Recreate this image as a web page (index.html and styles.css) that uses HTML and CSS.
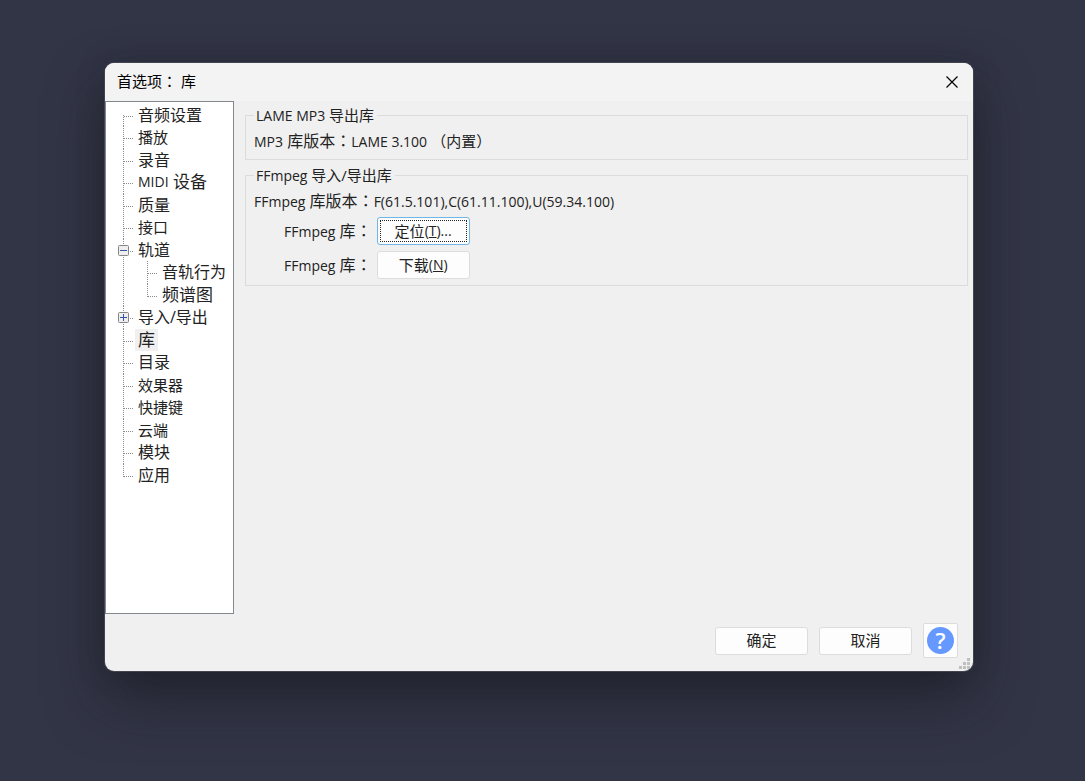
FILE: index.html
```html
<!DOCTYPE html>
<html lang="zh-CN">
<head>
<meta charset="utf-8">
<title>首选项： 库</title>
<link rel="stylesheet" href="styles.css">
</head>
<body>
<main class="dialog">
  <header class="titlebar">
    <h1 class="title">首选项<span class="colon" lang="zh-TW">：</span> 库</h1>
    <button class="close" type="button" aria-label="关闭">
      <svg width="12" height="12" viewBox="0 0 12 12"><path d="M0.5 0.5 11.5 11.5M11.5 0.5 0.5 11.5" stroke="#000" stroke-width="1.2" fill="none"/></svg>
    </button>
  </header>
  <div class="content">
    <nav class="sidebar">
      <ul class="tree">
        <li><span class="row wide">音频设置</span></li>
        <li><span class="row">播放</span></li>
        <li><span class="row wide">录音</span></li>
        <li><span class="row large"><span class="latin">MIDI</span>&nbsp;设备</span></li>
        <li><span class="row wide">质量</span></li>
        <li><span class="row">接口</span></li>
        <li class="branch"><span class="row wide"><button class="toggle" type="button" aria-label="折叠"><svg width="11" height="11" viewBox="0 0 11 11"><rect x=".5" y=".5" width="10" height="10" rx="1" fill="#eee" stroke="#858585"/><path d="M2 5.500h7" stroke="#3454a8"/></svg></button>轨道</span>
          <ul class="subtree">
            <li><span class="row wide">音轨行为</span></li>
            <li><span class="row large">频谱图</span></li>
          </ul>
        </li>
        <li><span class="row wide"><button class="toggle" type="button" aria-label="展开"><svg width="11" height="11" viewBox="0 0 11 11"><rect x=".5" y=".5" width="10" height="10" rx="1" fill="#eee" stroke="#858585"/><path d="M2 5.500h7M5.500 2v7" stroke="#3454a8"/></svg></button>导入/导出</span></li>
        <li><span class="row large"><span class="selected">库</span></span></li>
        <li><span class="row wide">目录</span></li>
        <li><span class="row">效果器</span></li>
        <li><span class="row">快捷键</span></li>
        <li><span class="row">云端</span></li>
        <li><span class="row wide">模块</span></li>
        <li><span class="row wide">应用</span></li>
      </ul>
    </nav>
    <section class="panel">
      <fieldset class="group">
        <legend><span class="latin">LAME MP3</span> 导出库</legend>
        <p class="version"><span class="latin">MP3</span> 库版本<span class="colon" lang="zh-TW">：</span><span class="latin">LAME 3.100</span> <span class="note">（内置）</span></p>
      </fieldset>
      <fieldset class="group">
        <legend><span class="latin">FFmpeg</span> 导入/导出库</legend>
        <p class="version"><span class="latin">FFmpeg</span> 库版本<span class="colon" lang="zh-TW">：</span><span class="latin">F(61.5.101),C(61.11.100),U(59.34.100)</span></p>
        <div class="fields">
          <label for="locate"><span class="latin">FFmpeg</span> 库<span class="colon" lang="zh-TW">：</span></label>
          <button class="button focused" id="locate" type="button"><span class="ring">定位<span class="latin">(<u>T</u>)...</span></span></button>
          <label for="download"><span class="latin">FFmpeg</span> 库<span class="colon" lang="zh-TW">：</span></label>
          <button class="button" id="download" type="button">下载<span class="latin">(<u>N</u>)</span></button>
        </div>
      </fieldset>
    </section>
  </div>
  <footer class="footer">
    <button class="button" type="button">确定</button>
    <button class="button" type="button">取消</button>
    <button class="help" type="button" aria-label="帮助"><span class="mark">?</span></button>
  </footer>
  <svg class="grip" width="12" height="12" viewBox="0 0 12 12" fill="#bfbfbf"><path d="M8 0h3v3H8zM4 4h3v3H4zM8 4h3v3H8zM0 8h3v3H0zM4 8h3v3H4zM8 8h3v3H8z"/></svg>
</main>
</body>
</html>
```

FILE: styles.css
```css
* { box-sizing: border-box; }

body {
  margin: 0;
  min-height: 100vh;
  padding: 63px 112px 110px 105px;
  display: flex;
  background: #323546;
  color: #222;
  font: 15px/22px "Open Sans", "Noto Sans CJK SC", sans-serif;
}

button {
  margin: 0;
  padding: 0;
  border: 0;
  background: none;
  color: inherit;
  font: inherit;
}

.dialog {
  position: relative;
  flex: 1;
  display: flex;
  flex-direction: column;
  border-radius: 9px;
  overflow: hidden;
  background: #f0f0f0;
  box-shadow: 0 0 0 1px #42444f, 0 28px 56px rgba(20, 20, 26, .5), 0 0 30px rgba(20, 20, 26, .2);
}

.titlebar {
  height: 38px;
  padding: 0 15px 0 12px;
  display: flex;
  align-items: center;
  justify-content: space-between;
  background: #f3f3f3;
}

.title {
  margin: 0;
  padding-bottom: 2px;
  color: #000;
  font-size: 15px;
  font-weight: 400;
}

.colon { font-family: "Noto Sans CJK TC", sans-serif; line-height: 1; }

.close { display: flex; }

.content {
  flex: 1;
  display: flex;
  gap: 11px;
}

.sidebar {
  width: 129px;
  padding-top: 2px;
  border: 1px solid #828790;
  background: #fff;
}

.tree, .subtree {
  margin: 0;
  padding: 0;
  list-style: none;
  display: flex;
  flex-direction: column;
}

.tree { height: 382px; }
.tree li { flex: 1; min-height: 0; }

.tree li {
  --line: #8a8a8a;
  background-image:
    repeating-linear-gradient(to bottom, var(--line) 0 1px, transparent 1px 2px),
    repeating-linear-gradient(to right, var(--line) 0 1px, transparent 1px 2px);
  background-repeat: no-repeat;
  background-size: 1px 100%, 10px 1px;
  background-position: 17px 0, 18px 12px;
}

.tree > li:first-child { background-size: 1px 11px, 10px 1px; background-position: 17px 100%, 18px 12px; }
.tree li:last-child { background-size: 1px 13px, 10px 1px; }

.tree > .branch {
  flex: 3;
  display: flex;
  flex-direction: column;
}

.branch > .row { flex: 1; }
.subtree { flex: 2; }
.tree .subtree li { background-position: 41px 0, 42px 12px; }
.subtree .row { padding-left: 56px; }

.row {
  display: flex;
  align-items: center;
  height: 22px;
  padding-left: 32px;
  white-space: nowrap;
}

.wide { font-size: 16px; }
.large { font-size: 17px; }
.latin { font-size: 14px; }
.note { font-size: 15px; }

.toggle {
  display: flex;
  width: 20px;
  margin-left: -20px;
}

.selected {
  margin-left: -3px;
  padding: 0 3px;
  background: #f0f0f0;
}

.panel {
  flex: 1;
  padding: 4px 5px 0 0;
  display: flex;
  flex-direction: column;
  gap: 5px;
}

.group {
  min-width: 0;
  margin: 0;
  padding: 4px 8px 6px;
  border: 1px solid #dcdcdc;
  font-size: 16px;
}

.group legend {
  padding: 0 3px 0 2px;
  font-size: 15px;
  line-height: 20px;
}

.version {
  margin: 0;
  white-space: nowrap;
}

.fields {
  margin: 4px 0 0 30px;
  display: grid;
  grid-template-columns: max-content 92px;
  gap: 6px 5px;
  align-items: center;
}

.button {
  width: 93px;
  height: 28px;
  padding-bottom: 1px;
  display: flex;
  align-items: center;
  justify-content: center;
  border: 1px solid #dcdcdc;
  border-radius: 3px;
  background: #fdfdfd;
  font-size: 15px;
}

.focused {
  padding: 2px;
  border-color: #70b5e8;
}

.ring {
  flex: 1;
  align-self: stretch;
  display: flex;
  align-items: center;
  justify-content: center;
  border: 1px dotted #222;
}

.footer {
  padding: 9px 15px 13px;
  display: flex;
  justify-content: flex-end;
  align-items: center;
  gap: 11px;
}

.help {
  width: 35px;
  height: 35px;
  display: flex;
  align-items: center;
  justify-content: center;
  border: 1px solid #dcdcdc;
  border-radius: 2px;
  background: #fdfdfd;
}

.mark {
  width: 27px;
  height: 27px;
  border-radius: 50%;
  background: #6699ff;
  color: #fff;
  font-size: 22px;
  font-weight: 600;
  line-height: 27px;
}

.grip {
  position: absolute;
  right: 2px;
  bottom: 1px;
}
```
